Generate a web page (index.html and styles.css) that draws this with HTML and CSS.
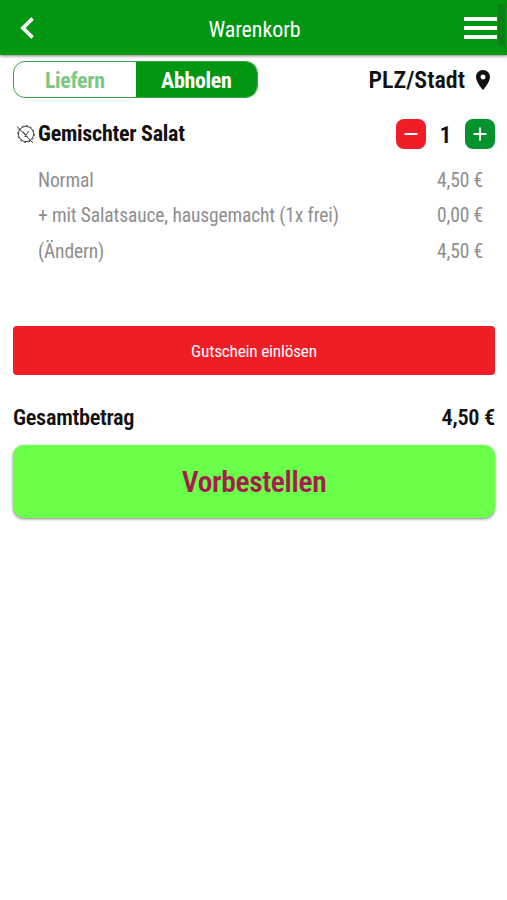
FILE: index.html
```html
<!DOCTYPE html>
<html lang="de">
<head>
  <meta charset="UTF-8">
  <meta name="viewport" content="width=device-width, initial-scale=1.0">
  <title>Warenkorb</title>
  <link rel="stylesheet" href="styles.css">
</head>
<body>
  <header class="header">
    <button class="header-back" aria-label="Zurück">
      <svg width="16" height="22" viewBox="0 0 16 22"><path d="M13.500 1.500L4 11L13.500 20.500" fill="none" stroke="#fff" stroke-width="3.800"/></svg>
    </button>
    <h1 class="header-title">Warenkorb</h1>
    <button class="header-menu" aria-label="Menü">
      <span></span>
      <span></span>
      <span></span>
    </button>
    <div class="scrollbar"></div>
  </header>
  <main class="cart">
    <section class="options">
      <div class="switch">
        <button class="switch-item">Liefern</button>
        <button class="switch-item active">Abholen</button>
      </div>
      <div class="location">
        <span>PLZ/Stadt</span>
        <svg width="14" height="20" viewBox="0 0 14 20"><path fill="#111" fill-rule="evenodd" d="M7 0C3.100 0 0 3.100 0 7c0 5.200 7 13 7 13s7-7.800 7-13C14 3.100 10.900 0 7 0zM7 4.500a2.500 2.500 0 1 1 0 5a2.500 2.500 0 0 1 0-5z"/></svg>
      </div>
    </section>

    <section class="item">
      <div class="item-head">
        <!-- Artikel entfernen -->
        <svg class="item-icon" width="20" height="20" viewBox="0 0 20 20" fill="none" stroke="#444" stroke-width="1">
          <circle cx="10" cy="10" r="7.600" />
          <circle cx="10" cy="10" r="8.300" stroke-dasharray="2 2.300" />
          <path d="M1 2.500L17 19M7 7.500l3 4M13 7l-3 4M8.500 12.500h3"/>
        </svg>
        <h2 class="item-name">Gemischter Salat</h2>
        <div class="amount">
          <button class="amount-button minus" aria-label="Weniger">
            <svg width="14" height="14" viewBox="0 0 14 14"><path d="M0.500 7h13" stroke="#fff" stroke-width="2"/></svg>
          </button>
          <span class="amount-value">1</span>
          <button class="amount-button plus" aria-label="Mehr">
            <svg width="14" height="14" viewBox="0 0 14 14"><path d="M0.500 7h13M7 0.500v13" stroke="#fff" stroke-width="2"/></svg>
          </button>
        </div>
      </div>
      <ul class="item-details">
        <li><span>Normal</span><span>4,50 €</span></li>
        <li><span>+ mit Salatsauce, hausgemacht (1x frei)</span><span>0,00 €</span></li>
        <li><span>(Ändern)</span><span>4,50 €</span></li>
      </ul>
    </section>

    <button class="button-voucher">Gutschein einlösen</button>
    <div class="total">
      <span>Gesamtbetrag</span>
      <span>4,50 €</span>
    </div>
    <button class="button-order">Vorbestellen</button>
  </main>
</body>
</html>
```

FILE: styles.css
```css
:root {
  --color-green: #039613;
  --color-red: #f01c26;
  --color-order: #6aff4b;
  --color-order-text: #a51d4c;
  --color-text: #111;
  --color-muted: #8e8e8e;
}
* {
  margin: 0;
  padding: 0;
  box-sizing: border-box;
}
body {
  min-height: 100vh;
  background-color: #fff;
  color: var(--color-text);
  font-family: "Roboto Condensed", Roboto, sans-serif;
  font-stretch: 75%;
}
button {
  border: none;
  background: none;
  font-family: inherit;
  font-stretch: inherit;
  cursor: pointer;
}
svg {
  display: block;
}
.header {
  position: relative;
  display: flex;
  align-items: center;
  justify-content: space-between;
  height: 55px;
  padding: 1px 10px 0 19px;
  background-color: var(--color-green);
  box-shadow: 0 1px 3px rgba(0, 0, 0, 0.5);
}
.header-back {
  width: 26px;
}
.header-title {
  padding-top: 2px;
  color: #fff;
  font-size: 22px;
  font-weight: 400;
  letter-spacing: -0.1px;
}
.header-menu {
  display: flex;
  flex-direction: column;
  gap: 5px;
  width: 33px;
}
.header-menu span {
  height: 4px;
  background-color: #fff;
}
.scrollbar {
  position: absolute;
  top: 4px;
  right: 2px;
  width: 7px;
  height: 42px;
  background-color: #0b8013;
}
.cart {
  display: flex;
  flex-direction: column;
  padding: 6px 12px 0 13px;
}
.options {
  display: flex;
  justify-content: space-between;
  align-items: center;
  height: 37px;
}
.switch {
  display: flex;
  width: 245px;
  height: 37px;
  border: 1px solid #3aa544;
  border-radius: 12px;
  overflow: hidden;
}
.switch-item {
  flex: 1;
  padding-top: 2px;
  color: #7cc883;
  font-size: 22px;
  font-weight: 700;
  letter-spacing: -0.35px;
}
.switch-item.active {
  background-color: var(--color-green);
  color: #fff;
}
.location {
  display: flex;
  align-items: center;
  gap: 11px;
  padding-right: 5px;
  font-size: 24px;
  font-weight: 600;
}
.item {
  margin-top: 21px;
}
.item-head {
  display: flex;
  align-items: center;
  height: 30px;
  padding-left: 3px;
}
.item-icon {
  margin-right: 2px;
}
.item-name {
  flex: 1;
  padding-bottom: 1px;
  font-size: 22px;
  font-weight: 700;
  letter-spacing: -0.25px;
}
.amount {
  display: flex;
  align-items: center;
}
.amount-button {
  display: flex;
  align-items: center;
  justify-content: center;
  width: 30px;
  height: 30px;
  border-radius: 8px;
}
.minus {
  background-color: var(--color-red);
}
.plus {
  background-color: #03922b;
}
.amount-value {
  width: 39px;
  padding-top: 2px;
  font-size: 24px;
  font-weight: 600;
  text-align: center;
}
.item-details {
  margin-top: 14px;
  padding: 0 12px 0 25px;
  color: var(--color-muted);
  font-size: 19.500px;
  letter-spacing: -0.130px;
  line-height: 35.400px;
  list-style: none;
}
.item-details li {
  display: flex;
  justify-content: space-between;
}
.button-voucher {
  height: 49px;
  margin-top: 57px;
  border-radius: 4px;
  background-color: var(--color-red);
  color: #fff;
  font-size: 17.300px;
  letter-spacing: -0.220px;
}
.total {
  display: flex;
  justify-content: space-between;
  margin-top: 27px;
  font-size: 22.300px;
  font-weight: 600;
  letter-spacing: -0.300px;
  line-height: 30px;
}
.button-order {
  height: 73px;
  margin-top: 13px;
  border-radius: 11px;
  background-color: var(--color-order);
  box-shadow: 0 1px 3px rgba(0, 0, 0, 0.5);
  color: var(--color-order-text);
  font-size: 29.500px;
  font-weight: 600;
  letter-spacing: -0.350px;
}
```
